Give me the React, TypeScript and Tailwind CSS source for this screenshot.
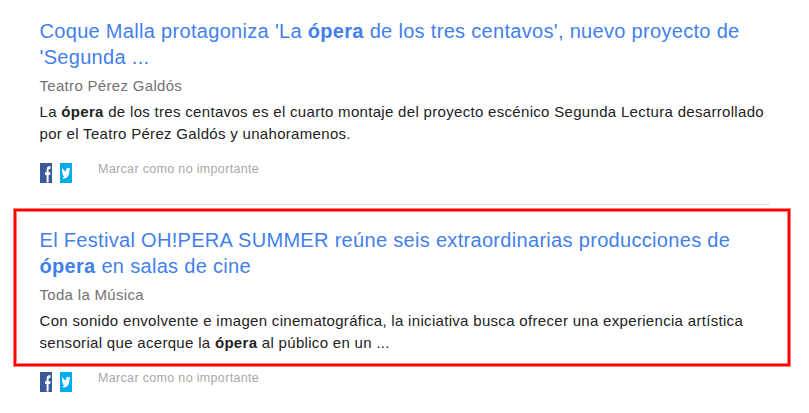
import type { ReactNode } from "react";

interface AlertItem {
  id: string;
  title: ReactNode;
  source: string;
  snippet: ReactNode;
}

const ITEMS: AlertItem[] = [
  {
    id: "coque-malla",
    title: (
      <>
        Coque Malla protagoniza 'La <b>ópera</b> de los tres centavos', nuevo proyecto de
        <br />
        'Segunda ...
      </>
    ),
    source: "Teatro Pérez Galdós",
    snippet: (
      <>
        La <b>ópera</b> de los tres centavos es el cuarto montaje del proyecto escénico Segunda Lectura desarrollado
        <br />
        por el Teatro Pérez Galdós y unahoramenos.
      </>
    ),
  },
  {
    id: "oh-pera",
    title: (
      <>
        El Festival OH!PERA SUMMER reúne seis extraordinarias producciones de
        <br />
        <b>ópera</b> en salas de cine
      </>
    ),
    source: "Toda la Música",
    snippet: (
      <>
        Con sonido envolvente e imagen cinematográfica, la iniciativa busca ofrecer una experiencia artística
        <br />
        sensorial que acerque la <b>ópera</b> al público en un ...
      </>
    ),
  },
];

function FacebookIcon() {
  return (
    <svg className="h-5 w-3" viewBox="0 0 12 20" aria-label="Facebook">
      <rect width="12" height="20" fill="#3b5998" />
      <path d="M6.600 19.500V12H5V9.200h1.600V7.300c0-2.500.9-4 2.500-4h1.400v2.600h-.9c-.8 0-1 .4-1 1.400v1.900h1.800l-.2 2.800H8.600v7.500z" fill="#fff" />
    </svg>
  );
}

function TwitterIcon() {
  return (
    <svg className="h-5 w-3" viewBox="0 0 12 20" aria-label="Twitter">
      <rect width="12" height="20" fill="#00aced" />
      <path d="M2.300 5c1 2 2.200 3 3.700 3.200 0-2.200.7-3.500 1.900-3.500.5 0 .9.300 1.200.7l1-.5-.5 1.500.7-.2-.9 1.600c0 4.200-1.900 7.700-4.900 7.700-1 0-1.900-.4-2.500-1 .9 0 1.700-.4 2.300-1-.8-.1-1.300-.9-1.500-1.900h.7c-.9-.4-1.500-1.500-1.500-2.900l.7.300C1.900 8 1.800 6.300 2.300 5z" fill="#fff" />
    </svg>
  );
}

function AlertEntry({ item }: { item: AlertItem }) {
  return (
    <article className="whitespace-nowrap">
      <div className="-ml-[0.5px] tracking-[0.312px]">
        <h3 className="text-[20px] leading-[26px] text-[#427fed]">{item.title}</h3>
        <p className="mt-[5px] text-[15px] leading-[22px] text-[#737373]">{item.source}</p>
        <p className="mt-1 text-[15px] leading-[22px] text-[#222]">{item.snippet}</p>
      </div>
      <div className="mt-[18px] flex h-5">
        <FacebookIcon />
        <span className="ml-2 flex">
          <TwitterIcon />
        </span>
        <span className="ml-[26px] text-[12.5px] leading-3 tracking-[0.33px] text-[#a8a8a8]">
          Marcar como no importante
        </span>
      </div>
    </article>
  );
}

export default function App() {
  return (
    <main className="relative h-[413px] w-[809px] overflow-hidden bg-white pl-10 pt-[18px] font-['Liberation_Sans',Arial,sans-serif]">
      <AlertEntry item={ITEMS[0]} />
      <hr className="mb-[22px] mt-[21px] w-[730px] border-[#e0e0e0]" />
      <AlertEntry item={ITEMS[1]} />
      {/* highlight frame drawn over the list */}
      <div className="absolute left-[13px] top-[208px] h-[159px] w-[778px] border border-[#ff8080]">
        <div className="h-full border-2 border-[#f00]">
          <div className="h-full border border-[#ff8080]" />
        </div>
      </div>
    </main>
  );
}
